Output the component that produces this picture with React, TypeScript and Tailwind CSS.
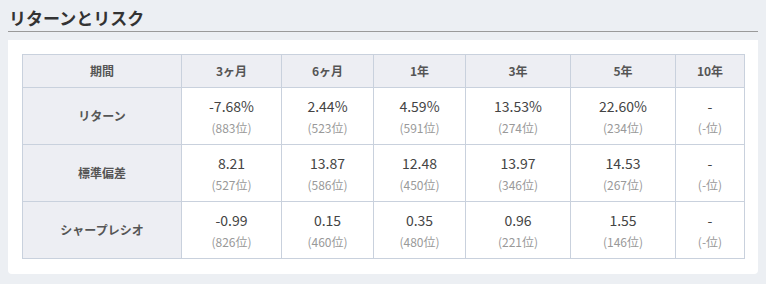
import React from "react";

const periods = ["3ヶ月", "6ヶ月", "1年", "3年", "5年", "10年"];

const rows = [
  {
    label: "リターン",
    cells: [
      ["-7.68%", "883"],
      ["2.44%", "523"],
      ["4.59%", "591"],
      ["13.53%", "274"],
      ["22.60%", "234"],
      ["-", "-"],
    ],
  },
  {
    label: "標準偏差",
    cells: [
      ["8.21", "527"],
      ["13.87", "586"],
      ["12.48", "450"],
      ["13.97", "346"],
      ["14.53", "267"],
      ["-", "-"],
    ],
  },
  {
    label: "シャープレシオ",
    cells: [
      ["-0.99", "826"],
      ["0.15", "460"],
      ["0.35", "480"],
      ["0.96", "221"],
      ["1.55", "146"],
      ["-", "-"],
    ],
  },
];

const widths = ["w-[159px]", "w-[100px]", "w-[92px]", "w-[92px]", "w-[105px]", "w-[105px]", "w-[69px]"];

const App: React.FC = () => {
  return (
    <div className="w-[766px] h-[284px] bg-[#eceff3] px-2 pt-[6px] font-['Noto_Sans_CJK_JP','Noto_Sans',sans-serif]">
      <h2 className="text-[17px] font-bold text-[#333] leading-[24px] pl-px pb-[1px] border-b border-[#9a9a9a]">
        リターンとリスク
      </h2>
      <div className="mt-2 bg-white rounded-b-[4px] px-[14px] pt-[14px] pb-[15px]">
        <table className="table-fixed border-collapse w-[722px] text-center">
          <colgroup>
            {widths.map((w, i) => (
              <col key={i} className={w} />
            ))}
          </colgroup>
          <thead>
            <tr className="h-[33px] bg-[#edeef3]">
              <th className="border border-[#c9d1dd] text-[12px] font-bold text-[#555]">期間</th>
              {periods.map((p) => (
                <th key={p} className="border border-[#c9d1dd] text-[12px] font-bold text-[#555]">
                  {p}
                </th>
              ))}
            </tr>
          </thead>
          <tbody>
            {rows.map((r) => (
              <tr key={r.label} className="h-[57px]">
                <th className="border border-[#c9d1dd] bg-[#edeef3] text-[12px] font-bold text-[#555]">
                  {r.label}
                </th>
                {r.cells.map(([v, rank], i) => (
                  <td key={i} className="border border-[#c9d1dd] align-middle">
                    <div className="text-[14px] leading-[20px] text-[#444]">{v}</div>
                    <div className="text-[12px] leading-[18px] mt-[3px] text-[#999]">({rank}位)</div>
                  </td>
                ))}
              </tr>
            ))}
          </tbody>
        </table>
      </div>
    </div>
  );
};

export default App;
